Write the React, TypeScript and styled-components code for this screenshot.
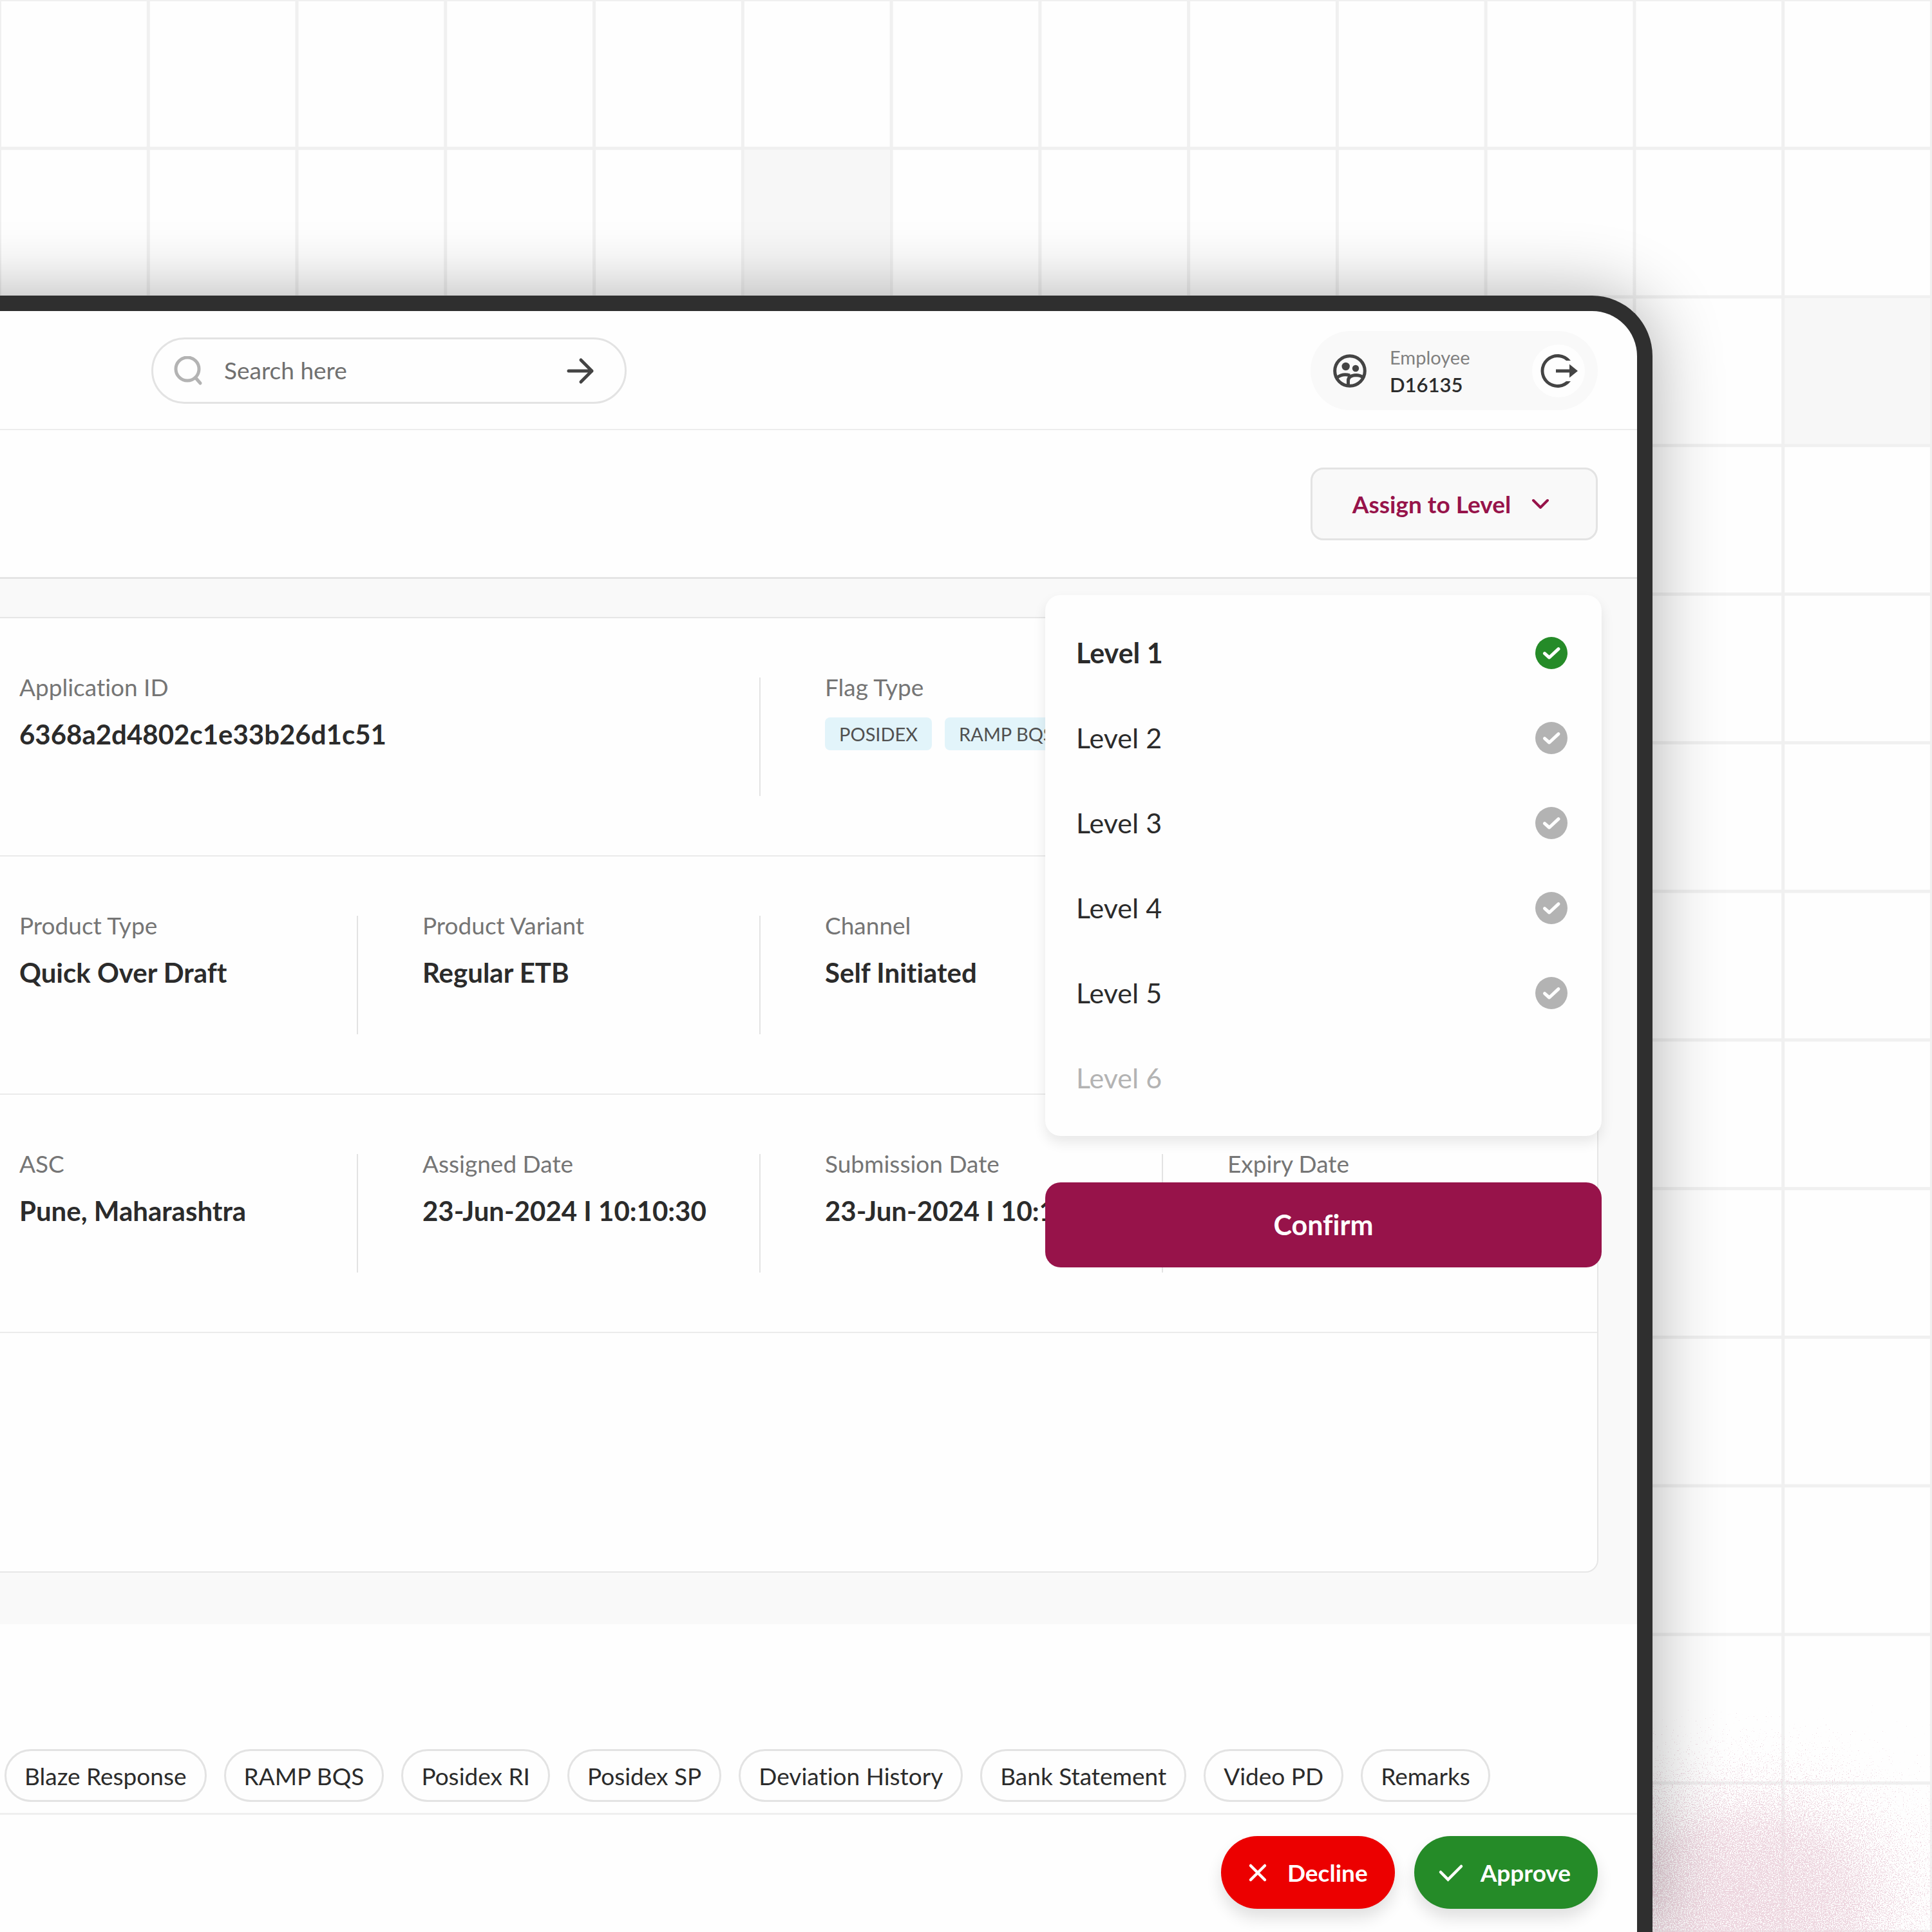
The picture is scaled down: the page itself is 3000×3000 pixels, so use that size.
import React, { useState } from "react";
import styled, { createGlobalStyle } from "styled-components";

const GlobalStyle = createGlobalStyle`
  *, *::before, *::after { box-sizing: border-box; }
  body { margin: 0; background: #fefefe; font-variant-ligatures: none; }
  body, button, input { font-family: Lato, "Noto Sans", sans-serif; }
  button { cursor: pointer; font-variant-ligatures: none; }
`;

const gridLine = "#f0f0f0";

const Backdrop = styled.div`
  position: relative;
  min-height: 100vh;
  padding: 459px 434px 0 0;
  overflow: hidden;
  background-color: #fefefe;
  background-image:
    linear-gradient(to right, ${gridLine} 2px, transparent 2px, transparent calc(100% - 3px), ${gridLine} calc(100% - 3px)),
    linear-gradient(to bottom, ${gridLine} 2px, transparent 2px, transparent calc(100% - 3px), ${gridLine} calc(100% - 3px));
  background-size: calc(100vw / 13) calc(100vw / 13);
`;

const ShadedCell = styled.div<{ $col: number; $row: number }>`
  position: absolute;
  left: calc(100vw / 13 * ${(p) => p.$col} + 2px);
  top: calc(100vw / 13 * ${(p) => p.$row} + 2px);
  width: calc(100vw / 13 - 5px);
  height: calc(100vw / 13 - 5px);
  background: #f7f7f7;
`;

const Glow = styled.svg`
  position: absolute;
  right: 0;
  bottom: 0;
  width: 720px;
  height: 360px;
`;

const Tablet = styled.div`
  position: relative;
  min-height: calc(100vh - 459px);
  margin-left: -120px;
  padding-left: 120px;
  border: solid #2f2f2f;
  border-width: 24px 24px 0 0;
  border-radius: 0 94px 0 0;
  background: #2f2f2f;
  box-shadow: 0 0 110px rgba(0, 0, 0, 0.32);
`;

const Screen = styled.div`
  min-height: calc(100vh - 483px);
  border-radius: 0 70px 0 0;
  overflow: hidden;
  background: #fefefe;
`;

const TopBar = styled.header`
  display: flex;
  align-items: center;
  justify-content: space-between;
  height: 185px;
  padding: 2px 61px 0 235px;
  border-bottom: 2px solid #ededed;
`;

const SearchForm = styled.form`
  display: flex;
  align-items: center;
  width: 738px;
  height: 103px;
  padding: 0 46px 0 32px;
  border: 3px solid #e3e3e3;
  border-radius: 52px;
`;

const SearchInput = styled.input`
  flex: 1;
  min-width: 0;
  margin: 0 24px 0 32px;
  padding: 0 0 2px;
  border: 0;
  outline: 0;
  background: transparent;
  color: #2b2b2b;
  font-size: 37px;
  line-height: 44px;
  &::placeholder { color: #707070; opacity: 1; }
`;

const IconButton = styled.button`
  display: flex;
  padding: 0;
  border: 0;
  background: transparent;
`;

const Account = styled.div`
  display: flex;
  align-items: center;
  width: 446px;
  height: 123px;
  padding: 0 20px 0 35px;
  border-radius: 62px;
  background: #f9f9f9;
  color: #444;
`;

const AccountText = styled.div`
  flex: 1;
  margin-left: 36px;
  padding-top: 2px;
`;

const AccountRole = styled.div`
  font-size: 29px;
  line-height: 40px;
  color: #808080;
`;

const AccountId = styled.div`
  font-size: 31px;
  line-height: 44px;
  font-weight: 600;
  color: #2b2b2b;
`;

const LogoutButton = styled(IconButton)`
  align-items: center;
  justify-content: center;
  width: 82px;
  height: 82px;
  border-radius: 50%;
  background: #fefefe;
`;

const ActionBar = styled.div`
  display: flex;
  align-items: center;
  justify-content: flex-end;
  height: 231px;
  padding: 0 61px;
  border-bottom: 3px solid #e5e5e5;
`;

const LevelPicker = styled.div`
  position: relative;
`;

const AssignButton = styled.button`
  display: flex;
  align-items: center;
  justify-content: center;
  gap: 32px;
  width: 446px;
  height: 113px;
  padding: 0 10px 0 0;
  border: 3px solid #e3e3e3;
  border-radius: 20px;
  background: #f9f9f9;
  color: #97134a;
  font-size: 37px;
  font-weight: 700;
`;

const Popover = styled.div`
  position: absolute;
  z-index: 2;
  top: calc(100% + 85px);
  right: -6px;
  display: flex;
  flex-direction: column;
  gap: 72px;
  width: 864px;
`;

const LevelList = styled.ul`
  margin: 0;
  padding: 24px 0;
  list-style: none;
  border-radius: 24px;
  background: #fefefe;
  box-shadow: 0 10px 20px rgba(0, 0, 0, 0.09);
`;

const LevelOption = styled.button<{ $active: boolean }>`
  display: flex;
  align-items: center;
  justify-content: space-between;
  width: 100%;
  height: 132px;
  padding: 0 53px 0 48px;
  border: 0;
  background: transparent;
  color: #2b2b2b;
  font-size: 43px;
  font-weight: ${(p) => (p.$active ? 700 : 400)};
  &:disabled { color: #b3b3b3; }
`;

const ConfirmButton = styled.button`
  height: 132px;
  border: 0;
  border-radius: 24px;
  background: #97134a;
  color: #fff;
  font-size: 43px;
  font-weight: 700;
`;

const Summary = styled.section`
  padding: 59px 60px 80px 0;
  background: #f9f9f9;
`;

const Card = styled.div`
  border: solid #e6e6e6;
  border-width: 2px 2px 2px 0;
  border-radius: 0 20px 20px 0;
  background: #fefefe;
`;

const CardRow = styled.div`
  display: grid;
  grid-template-columns: 556fr 625fr 625fr 674fr;
  height: 370px;
  padding: 92px 0;
  border-bottom: 2px solid #ebebeb;
  &:last-child { border-bottom: 0; }
`;

const Field = styled.div<{ $span: number }>`
  grid-column: span ${(p) => p.$span};
  padding-left: 100px;
  border-right: 2px solid #e3e3e3;
  white-space: nowrap;
  &:first-child { padding-left: 30px; }
  &:last-child { border-right: 0; }
`;

const FieldLabel = styled.div`
  color: #757575;
  font-size: 37px;
  line-height: 30px;
`;

const FieldValue = styled.div`
  margin-top: 30px;
  color: #2b2b2b;
  font-size: 42px;
  line-height: 56px;
  font-weight: 700;
`;

const Flags = styled.div`
  display: flex;
  gap: 20px;
  margin-top: 32px;
`;

const Flag = styled.span`
  padding: 0 22px;
  border-radius: 8px;
  background: #e2f4fa;
  color: #505050;
  font-size: 29px;
  line-height: 51px;
`;

const Tabs = styled.nav`
  display: flex;
  gap: 27px;
  padding: 194px 61px 17px 7px;
  border-bottom: 3px solid #efefef;
`;

const Tab = styled.button`
  height: 82px;
  padding: 0 28px;
  border: 3px solid #e3e3e3;
  border-radius: 41px;
  background: #fefefe;
  color: #2b2b2b;
  font-size: 37px;
  white-space: nowrap;
`;

const Footer = styled.footer`
  display: flex;
  justify-content: flex-end;
  gap: 30px;
  padding: 33px 61px 36px;
`;

const DecisionButton = styled.button<{ $color: string }>`
  display: flex;
  align-items: center;
  gap: 23px;
  height: 113px;
  padding: 0 42px 0 34px;
  border: 0;
  border-radius: 57px;
  background: ${(p) => p.$color};
  color: #fff;
  font-size: 37px;
  font-weight: 700;
  box-shadow: 0 14px 24px rgba(0, 0, 0, 0.12);
`;

const SearchIcon = () => (
  <svg width="46" height="46" viewBox="0 0 46 46" fill="none" stroke="#b3b3b3" strokeWidth="5" aria-hidden>
    <circle cx="21" cy="20" r="18" />
    <path d="M34 34l7 8" strokeLinecap="round" />
  </svg>
);

const ArrowIcon = () => (
  <svg width="44" height="44" viewBox="0 0 44 44" fill="none" stroke="#444" strokeWidth="5" strokeLinecap="round" strokeLinejoin="round" aria-hidden>
    <path d="M3 22h36M22 5l17 17-17 17" />
  </svg>
);

const AccountIcon = () => (
  <svg width="52" height="52" viewBox="0 0 52 52" fill="none" stroke="#444" strokeWidth="5" aria-hidden>
    <circle cx="26" cy="26" r="23.3" />
    <circle cx="19.7" cy="19" r="6.2" fill="#444" stroke="none" />
    <circle cx="35" cy="22" r="5.2" fill="#444" stroke="none" />
    <path d="M6 36.5Q15 29.5 26 33" />
    <path d="M23.5 50V41Q23.5 33 36 32.5Q41.5 32.5 47 36" />
  </svg>
);

const LogoutIcon = () => (
  <svg width="60" height="54" viewBox="0 0 60 54" fill="#444" aria-hidden>
    <path d="M49 11A26 26 0 1 0 49 43H42A21 21 0 1 1 42 11Z" />
    <path d="M26 24.5H47V16.5L60 27 47 37.5V29.5H26Z" />
  </svg>
);

const ChevronIcon = () => (
  <svg width="28" height="16" viewBox="0 0 28 16" fill="none" stroke="currentColor" strokeWidth="4" strokeLinecap="round" strokeLinejoin="round" aria-hidden>
    <path d="M3 3l11 11L25 3" />
  </svg>
);

const StatusIcon = ({ active }: { active: boolean }) => (
  <svg width="50" height="50" viewBox="0 0 50 50" fill="none" aria-hidden>
    <circle cx="25" cy="25" r="25" fill={active ? "#258b28" : "#b3b3b3"} />
    <path d="M14.5 25.7l7.2 6.3L36 18.6" stroke="#fff" strokeWidth="5" strokeLinecap="round" strokeLinejoin="round" />
  </svg>
);

const CrossIcon = () => (
  <svg width="46" height="36" viewBox="0 0 46 36" fill="none" stroke="#fff" strokeWidth="4.5" strokeLinecap="round" aria-hidden>
    <path d="M12 7l22 22M34 7L12 29" />
  </svg>
);

const CheckIcon = () => (
  <svg width="46" height="36" viewBox="0 0 46 36" fill="none" stroke="#fff" strokeWidth="4.5" strokeLinecap="round" aria-hidden>
    <path d="M7 17l11.5 11.5L39 8" />
  </svg>
);

const GrainGlow = () => (
  <Glow viewBox="0 0 720 360" aria-hidden>
    <defs>
      <filter id="grain" x="0" y="0" width="720" height="360" filterUnits="userSpaceOnUse" colorInterpolationFilters="sRGB">
        <feTurbulence type="fractalNoise" baseFrequency="0.6" numOctaves="2" seed="4" result="noise" />
        <feColorMatrix in="noise" type="matrix" values="0 0 0 0 0  0 0 0 0 0  0 0 0 0 0  0 0 0 1 0" result="alphaNoise" />
        <feComposite in="SourceAlpha" in2="alphaNoise" operator="arithmetic" k1="0" k2="12" k3="12" k4="-10" result="grains" />
        <feFlood floodColor="#edd6df" />
        <feComposite in2="grains" operator="in" />
      </filter>
      <radialGradient id="glow" gradientUnits="userSpaceOnUse" cx="0" cy="0" r="1" gradientTransform="translate(430 310) scale(460 320)">
        <stop offset="0" stopOpacity="0.46" />
        <stop offset="0.35" stopOpacity="0.4" />
        <stop offset="0.7" stopOpacity="0.18" />
        <stop offset="1" stopOpacity="0" />
      </radialGradient>
    </defs>
    <rect width="720" height="360" fill="url(#glow)" filter="url(#grain)" />
  </Glow>
);

type FieldData = { label: string; value?: string; flags?: string[]; span?: number };

const rows: FieldData[][] = [
  [
    { label: "Application ID", value: "6368a2d4802c1e33b26d1c51", span: 2 },
    { label: "Flag Type", flags: ["POSIDEX", "RAMP BQS"], span: 2 },
  ],
  [
    { label: "Product Type", value: "Quick Over Draft" },
    { label: "Product Variant", value: "Regular ETB" },
    { label: "Channel", value: "Self Initiated", span: 2 },
  ],
  [
    { label: "ASC", value: "Pune, Maharashtra" },
    { label: "Assigned Date", value: "23-Jun-2024 I 10:10:30" },
    { label: "Submission Date", value: "23-Jun-2024 I 10:10:30" },
    { label: "Expiry Date" },
  ],
  [],
];

const levels = ["Level 1", "Level 2", "Level 3", "Level 4", "Level 5", "Level 6"];

const tabs = [
  "Blaze Response",
  "RAMP BQS",
  "Posidex RI",
  "Posidex SP",
  "Deviation History",
  "Bank Statement",
  "Video PD",
  "Remarks",
];

export default function App() {
  const [level, setLevel] = useState("Level 1");
  const [open, setOpen] = useState(true);

  return (
    <Backdrop>
      <GlobalStyle />
      <ShadedCell $col={5} $row={1} />
      <ShadedCell $col={12} $row={2} />
      <GrainGlow />
      <Tablet>
        <Screen>
          <TopBar>
            <SearchForm role="search" onSubmit={(e) => e.preventDefault()}>
              <SearchIcon />
              <SearchInput type="text" placeholder="Search here" aria-label="Search here" />
              <IconButton type="submit" aria-label="Search">
                <ArrowIcon />
              </IconButton>
            </SearchForm>
            <Account>
              <AccountIcon />
              <AccountText>
                <AccountRole>Employee</AccountRole>
                <AccountId>D16135</AccountId>
              </AccountText>
              <LogoutButton type="button" aria-label="Log out">
                <LogoutIcon />
              </LogoutButton>
            </Account>
          </TopBar>

          <ActionBar>
            <LevelPicker>
              <AssignButton type="button" aria-expanded={open} onClick={() => setOpen(!open)}>
                Assign to Level
                <ChevronIcon />
              </AssignButton>
              {open && (
                <Popover>
                  <LevelList>
                    {levels.map((name) => {
                      const disabled = name === "Level 6";
                      return (
                        <li key={name}>
                          <LevelOption
                            type="button"
                            disabled={disabled}
                            $active={name === level}
                            onClick={() => setLevel(name)}
                          >
                            {name}
                            {!disabled && <StatusIcon active={name === level} />}
                          </LevelOption>
                        </li>
                      );
                    })}
                  </LevelList>
                  <ConfirmButton type="button" onClick={() => setOpen(false)}>
                    Confirm
                  </ConfirmButton>
                </Popover>
              )}
            </LevelPicker>
          </ActionBar>

          <Summary>
            <Card>
              {rows.map((fields, i) => (
                <CardRow key={i}>
                  {fields.map((field) => (
                    <Field key={field.label} $span={field.span ?? 1}>
                      <FieldLabel>{field.label}</FieldLabel>
                      {field.value && <FieldValue>{field.value}</FieldValue>}
                      {field.flags && (
                        <Flags>
                          {field.flags.map((flag) => (
                            <Flag key={flag}>{flag}</Flag>
                          ))}
                        </Flags>
                      )}
                    </Field>
                  ))}
                </CardRow>
              ))}
            </Card>
          </Summary>

          <Tabs aria-label="Reports">
            {tabs.map((tab) => (
              <Tab key={tab} type="button">
                {tab}
              </Tab>
            ))}
          </Tabs>

          <Footer>
            <DecisionButton type="button" $color="#ec0000">
              <CrossIcon />
              Decline
            </DecisionButton>
            <DecisionButton type="button" $color="#258b28">
              <CheckIcon />
              Approve
            </DecisionButton>
          </Footer>
        </Screen>
      </Tablet>
    </Backdrop>
  );
}
